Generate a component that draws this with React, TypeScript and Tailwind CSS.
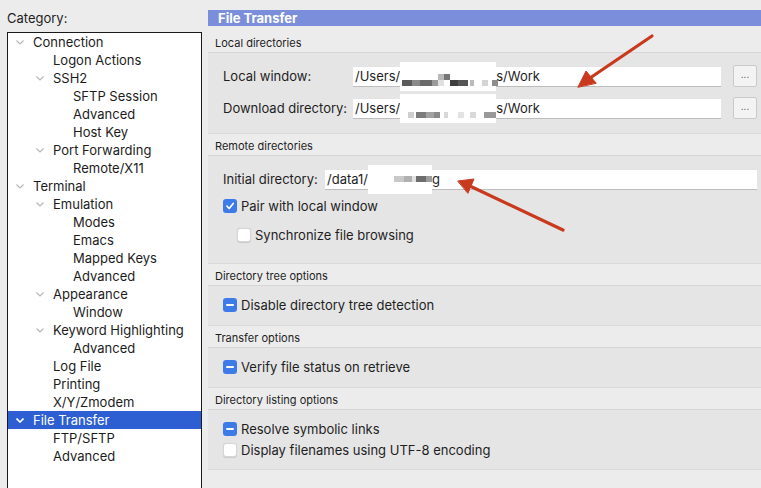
import React from "react";

type Item = { label: string; level: number; open?: boolean; selected?: boolean };

const tree: Item[] = [
  { label: "Connection", level: 0, open: true },
  { label: "Logon Actions", level: 1 },
  { label: "SSH2", level: 1, open: true },
  { label: "SFTP Session", level: 2 },
  { label: "Advanced", level: 2 },
  { label: "Host Key", level: 2 },
  { label: "Port Forwarding", level: 1, open: true },
  { label: "Remote/X11", level: 2 },
  { label: "Terminal", level: 0, open: true },
  { label: "Emulation", level: 1, open: true },
  { label: "Modes", level: 2 },
  { label: "Emacs", level: 2 },
  { label: "Mapped Keys", level: 2 },
  { label: "Advanced", level: 2 },
  { label: "Appearance", level: 1, open: true },
  { label: "Window", level: 2 },
  { label: "Keyword Highlighting", level: 1, open: true },
  { label: "Advanced", level: 2 },
  { label: "Log File", level: 1 },
  { label: "Printing", level: 1 },
  { label: "X/Y/Zmodem", level: 1 },
  { label: "File Transfer", level: 0, open: true, selected: true },
  { label: "FTP/SFTP", level: 1 },
  { label: "Advanced", level: 1 },
];

const padFor = ["pl-[25px]", "pl-[45px]", "pl-[65px]"];
const chevFor = ["left-[8px]", "left-[28px]", "left-[48px]"];

function Chevron({ white }: { white?: boolean }) {
  return (
    <svg width="8" height="5" viewBox="0 0 8 5" className="block">
      <polyline
        points="0.5,0.5 4,4 7.5,0.5"
        fill="none"
        stroke={white ? "#ffffff" : "#b5b5b5"}
        strokeWidth={white ? 1.6 : 1.1}
      />
    </svg>
  );
}

function TreeRow({ it }: { it: Item }) {
  return (
    <div
      className={
        "relative h-[18px] flex items-center text-[13px] leading-none " +
        padFor[it.level] +
        (it.selected ? " bg-[#2d5fd3] text-white" : " text-[#1c1c1c]")
      }
    >
      {it.open && (
        <span className={"absolute top-[7px] " + chevFor[it.level]}>
          <Chevron white={it.selected} />
        </span>
      )}
      <span>{it.label}</span>
    </div>
  );
}

function Pixels({ cells }: { cells: [number, number, number, string][] }) {
  return (
    <>
      {cells.map(([x, y, w, c], i) => (
        <span
          key={i}
          className="absolute"
          style={{ left: x, top: y, width: w, height: 6, background: c }}
        />
      ))}
    </>
  );
}

function Redact({
  w,
  cells,
}: {
  w: number;
  cells: [number, number, number, string][];
}) {
  return (
    <span className="relative inline-block h-full" style={{ width: w }}>
      <span className="absolute left-0 right-0 -top-[5px] -bottom-[5px] bg-white">
        <Pixels cells={cells} />
      </span>
    </span>
  );
}

function Check({ kind }: { kind: "checked" | "mixed" | "off" }) {
  if (kind === "off")
    return (
      <span className="inline-block w-[14px] h-[14px] rounded-[3px] bg-white border border-[#d6d6d6] shadow-[0_0.5px_1px_rgba(0,0,0,0.12)]" />
    );
  return (
    <span className="inline-flex items-center justify-center w-[14px] h-[14px] rounded-[3px] bg-[#3d7be8]">
      {kind === "checked" ? (
        <svg width="10" height="10" viewBox="0 0 10 10">
          <polyline
            points="2,5.2 4.2,7.5 8.2,2.5"
            fill="none"
            stroke="white"
            strokeWidth="1.7"
            strokeLinecap="round"
            strokeLinejoin="round"
          />
        </svg>
      ) : (
        <span className="block w-[8px] h-[2px] rounded-[1px] bg-white" />
      )}
    </span>
  );
}

function SectionLabel({ text, first }: { text: string; first?: boolean }) {
  return (
    <div
      className={
        "text-[11px] leading-none text-[#1e1e1e] pl-[7px] flex items-center " +
        (first ? "h-[26px] pt-[8px]" : "h-[21px] pt-[3px]")
      }
    >
      {text}
    </div>
  );
}

function Box({ children, className }: { children: React.ReactNode; className?: string }) {
  return (
    <div
      className={
        "bg-[#e5e5e5] border-t border-b border-t-[#d6d6d6] border-b-[#dadada] " +
        (className || "")
      }
    >
      {children}
    </div>
  );
}

function CheckRow({
  kind,
  label,
  indent,
}: {
  kind: "checked" | "mixed" | "off";
  label: string;
  indent?: boolean;
}) {
  return (
    <div
      className={
        "flex items-center gap-[4px] text-[13px] leading-none text-[#1e1e1e] h-[18px] " +
        (indent ? "pl-[29px]" : "pl-[15px]")
      }
    >
      <Check kind={kind} />
      <span>{label}</span>
    </div>
  );
}

const grayA: [number, number, number, string][] = [
  [2, 18, 10, "#5b5b5b"],
  [12, 18, 8, "#8a8a8a"],
  [20, 18, 12, "#6a6a6a"],
  [32, 18, 6, "#9a9a9a"],
  [38, 12, 6, "#b9b9b9"],
  [44, 12, 6, "#777777"],
  [38, 18, 6, "#e0e0e0"],
  [50, 18, 8, "#3e3e3e"],
  [58, 18, 10, "#555555"],
  [70, 18, 4, "#bbbbbb"],
  [82, 18, 6, "#d4d4d4"],
  [92, 18, 6, "#8e8e8e"],
];
const grayB: [number, number, number, string][] = [
  [8, 18, 6, "#cfcfcf"],
  [16, 18, 10, "#7c7c7c"],
  [26, 18, 8, "#a1a1a1"],
  [34, 18, 6, "#8a8a8a"],
  [44, 18, 4, "#d8d8d8"],
  [58, 18, 6, "#e3e3e3"],
  [70, 18, 6, "#d9d9d9"],
  [84, 18, 12, "#999999"],
];
const grayC: [number, number, number, string][] = [
  [26, 11, 10, "#c8c8c8"],
  [36, 11, 8, "#b0b0b0"],
  [44, 11, 4, "#e2e2e2"],
  [48, 11, 10, "#6d6d6d"],
  [58, 11, 6, "#9c9c9c"],
];

export default function App() {
  return (
    <div
      className="relative w-[761px] h-[488px] overflow-hidden bg-[#ececec] flex text-[#1e1e1e]"
      style={{ fontFamily: "Inter, 'Liberation Sans', Arial, sans-serif" }}
    >
      {/* Left: category tree */}
      <div className="w-[208px] shrink-0 pl-[7px] pt-[10px] flex flex-col">
        <div className="h-[16px] text-[13px] leading-none flex items-center">Category:</div>
        <div className="mt-[6px] w-[195px] flex-1 bg-white border border-[#1a1a1a] border-b-0">
          {tree.map((it, i) => (
            <TreeRow key={i} it={it} />
          ))}
        </div>
      </div>

      {/* Right: file transfer panel */}
      <div className="flex-1 pt-[10px] flex flex-col">
        <div className="h-[16px] bg-[#7b8edb] text-white font-bold text-[13px] leading-none flex items-center pl-[10px]">
          File Transfer
        </div>

        <SectionLabel text="Local directories" first />
        <Box className="pt-[12px] pb-[14px] flex flex-col gap-[10px]">
          {[
            { label: "Local window:", cells: grayA },
            { label: "Download directory:", cells: grayB },
          ].map((r, i) => (
            <div key={i} className="flex items-center h-[22px] pl-[15px]">
              <span className="w-[130px] text-[13px] leading-none">{r.label}</span>
              <div className="w-[368px] h-[21px] bg-white border-t border-b border-t-[#e4e4e4] border-b-[#bdbdbd] flex items-center pl-[2px] text-[13px] leading-none">
                <span>/Users/</span>
                <Redact w={96} cells={r.cells} />
                <span>s/Work</span>
              </div>
              <div className="ml-[12px] w-[24px] h-[22px] bg-[#f3f3f3] border border-[#c9c9c9] rounded-[2px] flex items-center justify-center text-[10px] leading-none text-[#555] pb-[4px]">
                ...
              </div>
            </div>
          ))}
        </Box>

        <SectionLabel text="Remote directories" />
        <Box className="pt-[13px] pb-[19px]">
          <div className="flex items-center h-[21px] pl-[15px]">
            <span className="w-[102px] text-[13px] leading-none">Initial directory:</span>
            <div className="w-[432px] h-[21px] bg-white border-t border-b border-t-[#e4e4e4] border-b-[#bdbdbd] flex items-center pl-[2px] text-[13px] leading-none">
              <span>/data1/</span>
              <Redact w={64} cells={grayC} />
              <span>g</span>
            </div>
          </div>
          <div className="mt-[7px]">
            <CheckRow kind="checked" label="Pair with local window" />
          </div>
          <div className="mt-[11px]">
            <CheckRow kind="off" label="Synchronize file browsing" indent />
          </div>
        </Box>

        <SectionLabel text="Directory tree options" />
        <Box className="pt-[10px] pb-[11px]">
          <CheckRow kind="mixed" label="Disable directory tree detection" />
        </Box>

        <SectionLabel text="Transfer options" />
        <Box className="pt-[10px] pb-[11px]">
          <CheckRow kind="mixed" label="Verify file status on retrieve" />
        </Box>

        <SectionLabel text="Directory listing options" />
        <Box className="pt-[10px] pb-[10px] flex flex-col gap-[3px]">
          <CheckRow kind="mixed" label="Resolve symbolic links" />
          <CheckRow kind="off" label="Display filenames using UTF-8 encoding" />
        </Box>
      </div>

      {/* Red annotation arrows */}
      <svg
        className="absolute left-0 top-0 pointer-events-none"
        width="761"
        height="488"
        viewBox="0 0 761 488"
      >
        <g stroke="#c9391d" strokeWidth="3.2" strokeLinecap="round" fill="#c9391d">
          <line x1="652" y1="36" x2="590" y2="78" />
          <polygon points="578,87 586,71 596,83" strokeWidth="1" strokeLinejoin="round" />
          <line x1="563" y1="230" x2="472" y2="187" />
          <polygon points="458,181 474,179 468,193" strokeWidth="1" strokeLinejoin="round" />
        </g>
      </svg>
    </div>
  );
}
